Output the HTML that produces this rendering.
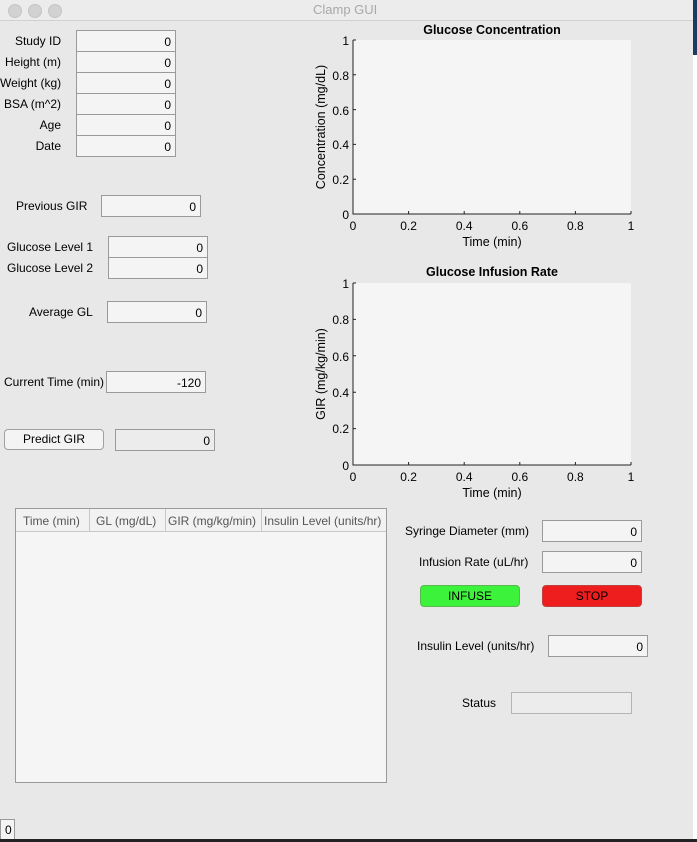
<!DOCTYPE html>
<html><head><style>
body{margin:0;width:697px;height:842px;background:#fff;position:relative;overflow:hidden;font-family:"Liberation Sans",sans-serif;font-size:12px;color:#000}
.win{position:absolute;left:0;top:0;width:693px;height:839px;background:#e8e8e8}
.tb{position:absolute;left:0;top:0;width:693px;height:20px;background:#ececec;border-bottom:1px solid #d0d0d0}
.dot{position:absolute;top:4px;width:12px;height:12px;border-radius:50%;background:#d2d2d2;border:0.5px solid #c4c4c4}
.t{position:absolute;white-space:nowrap;font-size:12px;line-height:14px}
.r{text-align:right}
.f{position:absolute;box-sizing:border-box;background:#f4f4f4;border:1px solid #9a9a9a;text-align:right;padding-right:4px;font-size:12px;line-height:22px}
.btn{position:absolute;box-sizing:border-box;border-radius:4px;text-align:center;font-size:12px}
</style></head><body>
<div style="position:absolute;left:693px;top:0;width:4px;height:55px;background:#1e3a5f"></div>
<div class="win">
<div class="tb"></div>
<div class="dot" style="left:8px"></div><div class="dot" style="left:28px"></div><div class="dot" style="left:48px"></div>
<div class="t" style="left:313px;top:3px;color:#a8a8a8;font-size:13px">Clamp GUI</div>

<div class="t r" style="left:0;width:61px;top:34px">Study ID</div>
<div class="t r" style="left:0;width:61px;top:55px">Height (m)</div>
<div class="t r" style="left:0;width:61px;top:76px">Weight (kg)</div>
<div class="t r" style="left:0;width:61px;top:97px">BSA (m^2)</div>
<div class="t r" style="left:0;width:61px;top:118px">Age</div>
<div class="t r" style="left:0;width:61px;top:139px">Date</div>
<div class="f" style="left:76px;top:30px;width:100px;height:22px">0</div>
<div class="f" style="left:76px;top:51px;width:100px;height:22px">0</div>
<div class="f" style="left:76px;top:72px;width:100px;height:22px">0</div>
<div class="f" style="left:76px;top:93px;width:100px;height:22px">0</div>
<div class="f" style="left:76px;top:114px;width:100px;height:22px">0</div>
<div class="f" style="left:76px;top:135px;width:100px;height:22px">0</div>

<div class="t" style="left:16px;top:199px">Previous GIR</div>
<div class="f" style="left:101px;top:195px;width:100px;height:22px">0</div>

<div class="t" style="left:7px;top:240px">Glucose Level 1</div>
<div class="t" style="left:7px;top:261px">Glucose Level 2</div>
<div class="f" style="left:108px;top:236px;width:100px;height:22px">0</div>
<div class="f" style="left:108px;top:257px;width:100px;height:22px">0</div>

<div class="t" style="left:29px;top:305px">Average GL</div>
<div class="f" style="left:107px;top:301px;width:100px;height:22px">0</div>

<div class="t" style="left:4px;top:375px">Current Time (min)</div>
<div class="f" style="left:106px;top:371px;width:100px;height:22px">-120</div>

<div class="btn" style="left:4px;top:429px;width:100px;height:21px;border:1px solid #a0a0a0;background:#f4f4f4;line-height:19px">Predict GIR</div>
<div class="f" style="left:115px;top:429px;width:100px;height:22px;background:#ececec">0</div>

<svg style="position:absolute;left:0;top:0" width="693" height="520" font-family="Liberation Sans" font-size="12">
<g>
<rect x="353" y="40" width="278" height="174" fill="#f5f5f5"/>
<path d="M353 40V214H631" stroke="#222" fill="none"/>
<path d="M353 40h3M353 74.8h3M353 109.6h3M353 144.4h3M353 179.2h3M408.6 214v-3M464.2 214v-3M519.8 214v-3M575.4 214v-3M631 214v-3" stroke="#222"/>
<g text-anchor="end"><text x="349" y="45">1</text><text x="349" y="80">0.8</text><text x="349" y="115">0.6</text><text x="349" y="149">0.4</text><text x="349" y="184">0.2</text><text x="349" y="219">0</text></g>
<g text-anchor="middle"><text x="353" y="230">0</text><text x="408.6" y="230">0.2</text><text x="464.2" y="230">0.4</text><text x="519.8" y="230">0.6</text><text x="575.4" y="230">0.8</text><text x="631" y="230">1</text>
<text x="492" y="246" font-size="12.5">Time (min)</text>
<text x="492" y="34" font-weight="bold" font-size="12.5">Glucose Concentration</text>
<text transform="translate(325 127) rotate(-90)" font-size="12.5">Concentration (mg/dL)</text></g>
</g>
<g>
<rect x="353" y="283" width="278" height="182" fill="#f5f5f5"/>
<path d="M353 283V465H631" stroke="#222" fill="none"/>
<path d="M353 283h3M353 319.4h3M353 355.8h3M353 392.2h3M353 428.6h3M408.6 465v-3M464.2 465v-3M519.8 465v-3M575.4 465v-3M631 465v-3" stroke="#222"/>
<g text-anchor="end"><text x="349" y="288">1</text><text x="349" y="324">0.8</text><text x="349" y="361">0.6</text><text x="349" y="397">0.4</text><text x="349" y="433">0.2</text><text x="349" y="470">0</text></g>
<g text-anchor="middle"><text x="353" y="481">0</text><text x="408.6" y="481">0.2</text><text x="464.2" y="481">0.4</text><text x="519.8" y="481">0.6</text><text x="575.4" y="481">0.8</text><text x="631" y="481">1</text>
<text x="492" y="497" font-size="12.5">Time (min)</text>
<text x="492" y="276" font-weight="bold" font-size="12.5">Glucose Infusion Rate</text>
<text transform="translate(325 374) rotate(-90)" font-size="12.5">GIR (mg/kg/min)</text></g>
</g>
</svg>

<div style="position:absolute;left:15px;top:508px;width:372px;height:275px;box-sizing:border-box;border:1px solid #9a9a9a;background:#f5f5f5"></div>
<div style="position:absolute;left:16px;top:509px;width:370px;height:22px;border-bottom:1px solid #c8c8c8;background:#f2f2f2"></div>
<div style="position:absolute;left:89px;top:509px;width:1px;height:22px;background:#c8c8c8"></div>
<div style="position:absolute;left:165px;top:509px;width:1px;height:22px;background:#c8c8c8"></div>
<div style="position:absolute;left:261px;top:509px;width:1px;height:22px;background:#c8c8c8"></div>
<div class="t" style="left:23px;top:514px;color:#555">Time (min)</div>
<div class="t" style="left:96px;top:514px;color:#555">GL (mg/dL)</div>
<div class="t" style="left:168px;top:514px;color:#555">GIR (mg/kg/min)</div>
<div class="t" style="left:264px;top:514px;color:#555">Insulin Level (units/hr)</div>

<div class="t" style="left:405px;top:524px">Syringe Diameter (mm)</div>
<div class="f" style="left:542px;top:520px;width:100px;height:22px">0</div>
<div class="t" style="left:419px;top:555px">Infusion Rate (uL/hr)</div>
<div class="f" style="left:542px;top:551px;width:100px;height:22px">0</div>
<div class="btn" style="left:420px;top:585px;width:100px;height:22px;background:#3df23a;border:1px solid #5ab84f;line-height:20px">INFUSE</div>
<div class="btn" style="left:542px;top:585px;width:100px;height:22px;background:#ee1e1e;border:1px solid #c04040;line-height:20px">STOP</div>

<div class="t" style="left:417px;top:639px">Insulin Level (units/hr)</div>
<div class="f" style="left:548px;top:635px;width:100px;height:22px">0</div>

<div class="t" style="left:462px;top:696px">Status</div>
<div class="f" style="left:511px;top:692px;width:121px;height:22px;background:#ececec;border-color:#b4b4b4"></div>

<div class="f" style="left:0;top:819px;width:15px;height:21px;padding:0 0 0 4px;text-align:left;line-height:20px">0</div>
</div>
<div style="position:absolute;left:0;top:839px;width:697px;height:3px;background:#222"></div>
</body></html>
